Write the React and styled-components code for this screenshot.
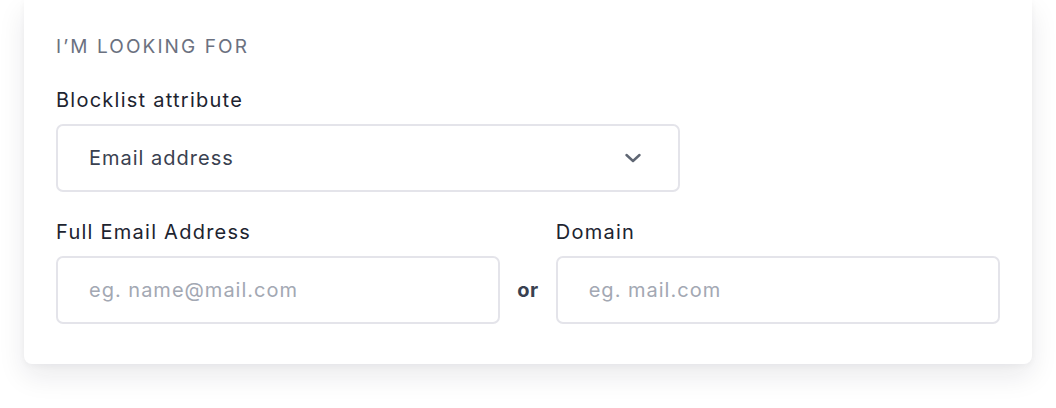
import styled, { createGlobalStyle } from 'styled-components'

const GlobalStyle = createGlobalStyle`
  body {
    margin: 0;
    background: #ffffff;
    font-family: Inter, "Open Sans", sans-serif;
  }
`

const Page = styled.div`
  padding: 0 24px 44px 24px;
`

const Card = styled.section`
  background: #ffffff;
  border-radius: 0 0 8px 8px;
  box-shadow: 0 12px 28px rgba(20, 20, 40, 0.09), 0 2px 6px rgba(20, 20, 40, 0.04);
  padding: 33px 32px 40px 32px;
`

const Heading = styled.h3`
  margin: 0 0 25px 0;
  font-size: 19px;
  line-height: 28px;
  font-weight: 400;
  letter-spacing: 2.1px;
  color: #6b7180;
  text-transform: uppercase;
`

const Label = styled.label`
  display: block;
  font-size: 20px;
  line-height: 28px;
  font-weight: 400;
  letter-spacing: 1.25px;
  color: #1d2430;
  margin-bottom: 10px;
`

const Field = styled.div`
  height: 68px;
  box-sizing: border-box;
  border: 2px solid #e4e4ea;
  border-radius: 7px;
  display: flex;
  align-items: center;
  justify-content: space-between;
  padding: 0 37px 0 31px;
  width: ${p => (p.$width ? p.$width + 'px' : '100%')};
  font-size: 20px;
  letter-spacing: 1px;
  color: ${p => (p.$placeholder ? '#a3a8b3' : '#394150')};
`

const Row = styled.div`
  display: grid;
  grid-template-columns: 1fr auto 1fr;
  column-gap: 17px;
  margin-top: 26px;
`

const Or = styled.span`
  grid-row: 2;
  grid-column: 2;
  align-self: center;
  font-size: 20px;
  font-weight: 700;
  letter-spacing: 0.5px;
  color: #394150;
`

const Chevron = () => (
  <svg width="16" height="10" viewBox="0 0 16 10" fill="none">
    <path d="M1.5 2l6.5 6 6.5-6" stroke="#5f6673" strokeWidth="2.4" strokeLinecap="round" strokeLinejoin="round" />
  </svg>
)

export default function App() {
  return (
    <>
      <GlobalStyle />
      <Page>
        <Card>
          <Heading>I’m looking for</Heading>
          <Label>Blocklist attribute</Label>
          <Field $width={624}>
            <span>Email address</span>
            <Chevron />
          </Field>
          <Row>
            <Label style={{ gridColumn: 1 }}>Full Email Address</Label>
            <Label style={{ gridColumn: 3 }}>Domain</Label>
            <Field $placeholder style={{ gridColumn: 1 }}>eg. name@mail.com</Field>
            <Or>or</Or>
            <Field $placeholder style={{ gridColumn: 3 }}>eg. mail.com</Field>
          </Row>
        </Card>
      </Page>
    </>
  )
}
